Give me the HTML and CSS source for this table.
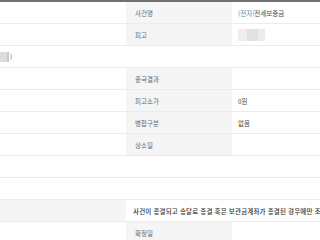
FILE: index.html
```html
<!DOCTYPE html>
<html lang="ko">
<head>
<meta charset="utf-8">
<link rel="stylesheet" href="styles.css">
</head>
<body>
<div class="wrap">
  <table class="info">
    <colgroup>
      <col class="c-left">
      <col class="c-label">
      <col class="c-value">
    </colgroup>
    <tbody>
      <tr>
        <td></td>
        <th>사건명</th>
        <td class="val"><span class="tag">[전자]</span>전세보증금</td>
      </tr>
      <tr>
        <td></td>
        <th>피고</th>
        <td class="val"><span class="blur"></span></td>
      </tr>
      <tr>
        <td colspan="3" class="full"><span class="blur-l"></span>)</td>
      </tr>
      <tr>
        <td></td>
        <th>종국결과</th>
        <td class="val"></td>
      </tr>
      <tr>
        <td></td>
        <th>피고소가</th>
        <td class="val">0원</td>
      </tr>
      <tr>
        <td></td>
        <th>병합구분</th>
        <td class="val">없음</td>
      </tr>
      <tr>
        <td></td>
        <th>상소일</th>
        <td class="val"></td>
      </tr>
      <tr>
        <td colspan="3"></td>
      </tr>
      <tr>
        <td colspan="3"></td>
      </tr>
      <tr>
        <th></th>
        <td colspan="2" class="note">사건이 종결되고 송달료 종결 혹은 보관금계좌가 종결된 경우에만 조회가 가능합니다.</td>
      </tr>
      <tr>
        <td></td>
        <th>확정일</th>
        <td class="val"></td>
      </tr>
    </tbody>
  </table>
</div>
</body>
</html>
```

FILE: styles.css
```css
html, body {
  margin: 0;
  padding: 0;
  background: #fff;
}
.wrap {
  width: 320px;
  height: 240px;
  overflow: hidden;
}
.info {
  table-layout: fixed;
  border-collapse: collapse;
  width: 460px;
  border-top: 2px solid #707070;
  font-family: "Noto Sans CJK KR", "Noto Sans", sans-serif;
  font-size: 6.5px;
  color: #555;
}
.c-left { width: 126px; }
.c-label { width: 106px; }
.c-value { width: 228px; }
.info th,
.info td {
  height: 21px;
  padding: 0;
  border-bottom: 1px solid #ececec;
  text-align: left;
  vertical-align: middle;
  white-space: nowrap;
  overflow: hidden;
  line-height: 10px;
}
.info th {
  background: #f5f5f5;
  font-weight: normal;
  color: #6a6a6a;
  padding-left: 9px;
}
.info td.val {
  padding-left: 6px;
  color: #4a4a4a;
}
.tag {
  color: #3a8fb0;
}
.blur {
  display: inline-block;
  vertical-align: middle;
  width: 27px;
  height: 12px;
  background: linear-gradient(90deg, #eeeeee 0 9px, #e2e2e2 9px 20px, #ececec 20px 27px);
}
.full {
  color: #555;
}
.blur-l {
  display: inline-block;
  vertical-align: middle;
  width: 9px;
  height: 10px;
  margin-right: 1px;
  background: linear-gradient(90deg, #dcdcdc 0 7px, #b9cde0 7px 9px);
}
.info td.note {
  padding-left: 7px;
  color: #333;
  font-weight: 500;
  font-size: 6.5px;
  letter-spacing: 0.16px;
}
```
